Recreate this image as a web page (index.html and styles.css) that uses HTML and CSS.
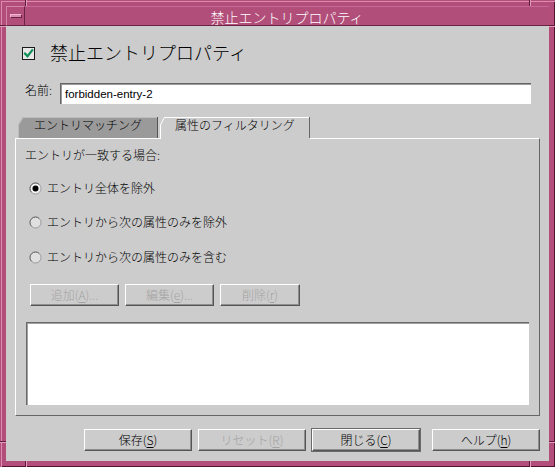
FILE: index.html
```html
<!DOCTYPE html>
<html lang="ja">
<head>
<meta charset="utf-8">
<title>禁止エントリプロパティ</title>
<link rel="stylesheet" href="styles.css">
</head>
<body>
<div class="frame">
  <span class="notch notch-v" style="left:25px;top:0"></span>
  <span class="notch notch-v" style="left:529px;top:0"></span>
  <span class="notch notch-v" style="left:25px;top:461px"></span>
  <span class="notch notch-v" style="left:529px;top:461px"></span>
  <span class="notch notch-h" style="left:0;top:25px"></span>
  <span class="notch notch-h" style="left:549px;top:25px"></span>
  <span class="notch notch-h" style="left:0;top:441px"></span>
  <span class="notch notch-h" style="left:549px;top:441px"></span>

  <div class="titlebar">
    <div class="menu-btn"><span class="menu-bar"></span></div>
    <div class="title">禁止エントリプロパティ</div>
  </div>

  <div class="content">
    <div class="header">
      <span class="checkbox">
        <svg width="11" height="11" viewBox="0 0 11 11"><path d="M2 5.5 L4.5 8.2 L9.2 2.2" fill="none" stroke="#0f9159" stroke-width="2.2" stroke-linecap="square"/></svg>
      </span>
      <span class="header-text">禁止エントリプロパティ</span>
    </div>

    <div class="name-row">
      <span class="name-label">名前:</span>
      <div class="textfield">forbidden-entry-2</div>
    </div>

    <div class="tabs">
      <div class="tab tab-inactive">
        <svg class="tab-shape" width="140" height="21" viewBox="0 0 140 21">
          <path d="M0 21 V8 L5 0 H140 V21 Z" fill="#9a9a9a"/>
          <path d="M0.5 21 V8 L5.3 0.5 H139" fill="none" stroke="#bdbdbd"/>
          <path d="M139.5 0 V21" fill="none" stroke="#555"/>
        </svg>
        <span class="tab-label">エントリマッチング</span>
      </div>
      <div class="tab tab-active">
        <svg class="tab-shape" width="150" height="22" viewBox="0 0 150 22">
          <path d="M0 22 V8 L4 0 H150 V22 Z" fill="#cccccc"/>
          <path d="M0.5 22 V8 L4.3 0.5 H149" fill="none" stroke="#ffffff"/>
          <path d="M149.5 0 V21" fill="none" stroke="#666"/>
        </svg>
        <span class="tab-label">属性のフィルタリング</span>
      </div>
    </div>

    <div class="panel">
      <div class="panel-label">エントリが一致する場合:</div>
      <div class="radios">
        <div class="radio-row">
          <svg class="radio" width="13" height="13" viewBox="0 0 13 13">
            <circle cx="6.5" cy="6.5" r="5.5" fill="#f2f2f2"/>
            <path d="M2.61 10.39 A5.5 5.5 0 0 1 10.39 2.61" fill="none" stroke="#4a4a4a"/>
            <path d="M10.39 2.61 A5.5 5.5 0 0 1 2.61 10.39" fill="none" stroke="#9a9a9a"/>
            <circle cx="6.5" cy="6.5" r="3" fill="#000"/>
          </svg>
          <span>エントリ全体を除外</span>
        </div>
        <div class="radio-row">
          <svg class="radio" width="13" height="13" viewBox="0 0 13 13">
            <circle cx="6.5" cy="6.5" r="5.5" fill="#e0e0e0"/>
            <path d="M2.61 10.39 A5.5 5.5 0 0 1 10.39 2.61" fill="none" stroke="#555555"/>
            <path d="M10.39 2.61 A5.5 5.5 0 0 1 2.61 10.39" fill="none" stroke="#9a9a9a"/>
          </svg>
          <span>エントリから次の属性のみを除外</span>
        </div>
        <div class="radio-row radio-last">
          <svg class="radio" width="13" height="13" viewBox="0 0 13 13">
            <circle cx="6.5" cy="6.5" r="5.5" fill="#e0e0e0"/>
            <path d="M2.61 10.39 A5.5 5.5 0 0 1 10.39 2.61" fill="none" stroke="#555555"/>
            <path d="M10.39 2.61 A5.5 5.5 0 0 1 2.61 10.39" fill="none" stroke="#9a9a9a"/>
          </svg>
          <span>エントリから次の属性のみを含む</span>
        </div>
      </div>

      <div class="btn-row">
        <div class="btn disabled w89">追加(<span class="mn">A</span>)...</div>
        <div class="btn disabled w89">編集(<span class="mn">e</span>)...</div>
        <div class="btn disabled w80">削除(<span class="mn">r</span>)</div>
      </div>

      <div class="listbox"></div>
    </div>

    <div class="footer">
      <div class="btn w108">保存(<span class="mn">S</span>)</div>
      <div class="btn disabled w108">リセット(<span class="mn">R</span>)</div>
      <div class="btn default w108">閉じる(<span class="mn">C</span>)</div>
      <div class="btn w108 help">ヘルプ(<span class="mn">h</span>)</div>
    </div>
  </div>
</div>
</body>
</html>
```

FILE: styles.css
```css
* { box-sizing: border-box; }

html, body {
  margin: 0;
  padding: 0;
}

body {
  width: 555px;
  height: 467px;
  overflow: hidden;
  background: #b34e7b;
  font-family: "Noto Sans CJK JP", "Liberation Sans", sans-serif;
  font-weight: 300;
  font-size: 12px;
  color: #000;
}

.frame {
  position: relative;
  width: 555px;
  height: 467px;
  padding: 6px;
  background: #b34e7b;
  box-shadow: inset 1px 1px 0 #b34e7b, inset 2px 2px 0 #db8cb0, inset -1px -1px 0 #4e1431, inset -2px -2px 0 #b34e7b;
  display: flex;
  flex-direction: column;
}

.notch {
  position: absolute;
  background: #5e1b3a;
}
.notch-v {
  width: 1px;
  height: 6px;
  box-shadow: 1px 0 0 #e29bbb;
}
.notch-h {
  width: 6px;
  height: 1px;
  box-shadow: 0 1px 0 #e29bbb;
}

/* title bar */
.titlebar {
  height: 20px;
  display: flex;
  background: #b24e7a;
  box-shadow: inset 0 -1px 0 #6a2245;
}

.menu-btn {
  width: 19px;
  height: 20px;
  display: flex;
  align-items: center;
  justify-content: center;
  border-top: 1px solid #d683a8;
  border-left: 1px solid #d683a8;
  border-right: 1px solid #6a2245;
  border-bottom: 1px solid #6a2245;
}

.menu-bar {
  width: 12px;
  height: 4px;
  background: #d98aae;
  border-top: 1px solid #efb8d0;
  border-bottom: 1px solid #6a2245;
  border-right: 1px solid #6a2245;
  border-left: 1px solid #efb8d0;
}

.title {
  flex: 1;
  text-align: center;
  color: #ffffff;
  font-size: 14px;
  line-height: 20px;
  border-top: 1px solid #c8679a;
}

/* content */
.content {
  flex: 1;
  background: #cccccc;
  display: flex;
  flex-direction: column;
}

.header {
  margin-top: 14px;
  height: 24px;
  padding-left: 16px;
  display: flex;
  align-items: center;
  gap: 15px;
}

.checkbox {
  width: 13px;
  height: 13px;
  margin-top: 3px;
  border: 1px solid #1a1a1a;
  background: #e8e8e8;
  display: flex;
  align-items: center;
  justify-content: center;
}

.header-text {
  font-size: 18px;
  line-height: 24px;
}

.name-row {
  margin-top: 19px;
  padding-left: 19px;
  display: flex;
  align-items: flex-start;
}

.name-label {
  width: 35px;
  line-height: 13px;
  font-size: 12px;
}

.textfield {
  width: 471px;
  height: 21px;
  background: #ffffff;
  border-top: 1px solid #666666;
  border-left: 1px solid #666666;
  box-shadow: inset 1px 1px 0 #9a9a9a;
  padding-left: 4px;
  font-family: "Liberation Sans", Arial, sans-serif;
  font-weight: 400;
  font-size: 11.5px;
  line-height: 20px;
}

/* tabs */
.tabs {
  margin-top: 13px;
  height: 21px;
  padding-left: 12px;
  display: flex;
  align-items: flex-end;
  gap: 2px;
}

.tab {
  position: relative;
  display: flex;
  justify-content: center;
  align-items: flex-start;
}

.tab-inactive {
  width: 140px;
  height: 21px;
}

.tab-active {
  width: 150px;
  height: 22px;
  margin-bottom: -1px;
  z-index: 1;
}

.tab-shape {
  position: absolute;
  left: 0;
  top: 0;
}

.tab-label {
  position: relative;
  line-height: 16px;
  font-size: 12px;
}

/* panel */
.panel {
  margin-left: 9px;
  width: 525px;
  height: 278px;
  border-top: 1px solid #ffffff;
  border-left: 1px solid #ffffff;
  border-right: 1px solid #666666;
  border-bottom: 1px solid #666666;
  padding: 8px 0 0 9px;
  display: flex;
  flex-direction: column;
}

.panel-label {
  line-height: 16px;
}

.radios {
  margin-top: 17px;
  display: flex;
  flex-direction: column;
  gap: 18px;
}

.radio-row {
  height: 16px;
  margin-left: 4px;
  display: flex;
  align-items: center;
  gap: 5px;
  line-height: 16px;
}

.radio-last {
  margin-top: 1px;
}

.radio {
  flex: none;
}

.btn-row {
  margin-top: 19px;
  margin-left: 5px;
  display: flex;
  gap: 6px;
}

.btn {
  height: 22px;
  display: flex;
  align-items: center;
  justify-content: center;
  background: #cccccc;
  border-top: 1px solid #ffffff;
  border-left: 1px solid #ffffff;
  border-right: 1px solid #555555;
  border-bottom: 1px solid #555555;
  box-shadow: inset -1px -1px 0 #8e8e8e;
  font-size: 12px;
  line-height: 16px;
  white-space: nowrap;
}

.btn.disabled {
  color: #a3a3a3;
}

.btn.default {
  outline: 1px solid #6a6a6a;
  outline-offset: 0;
}

.mn {
  text-decoration: underline;
  text-underline-offset: 2px;
}

.w89 { width: 89px; }
.w80 { width: 80px; }
.w108 { width: 108px; }

.listbox {
  margin-top: 16px;
  margin-left: 1px;
  width: 503px;
  height: 83px;
  background: #ffffff;
  border-top: 1px solid #6a6a6a;
  border-left: 1px solid #6a6a6a;
  box-shadow: inset 1px 1px 0 #a0a0a0;
}

/* footer */
.footer {
  margin-top: 13px;
  padding-left: 78px;
  display: flex;
  gap: 6px;
}

.footer .help {
  margin-left: 6px;
}
```
